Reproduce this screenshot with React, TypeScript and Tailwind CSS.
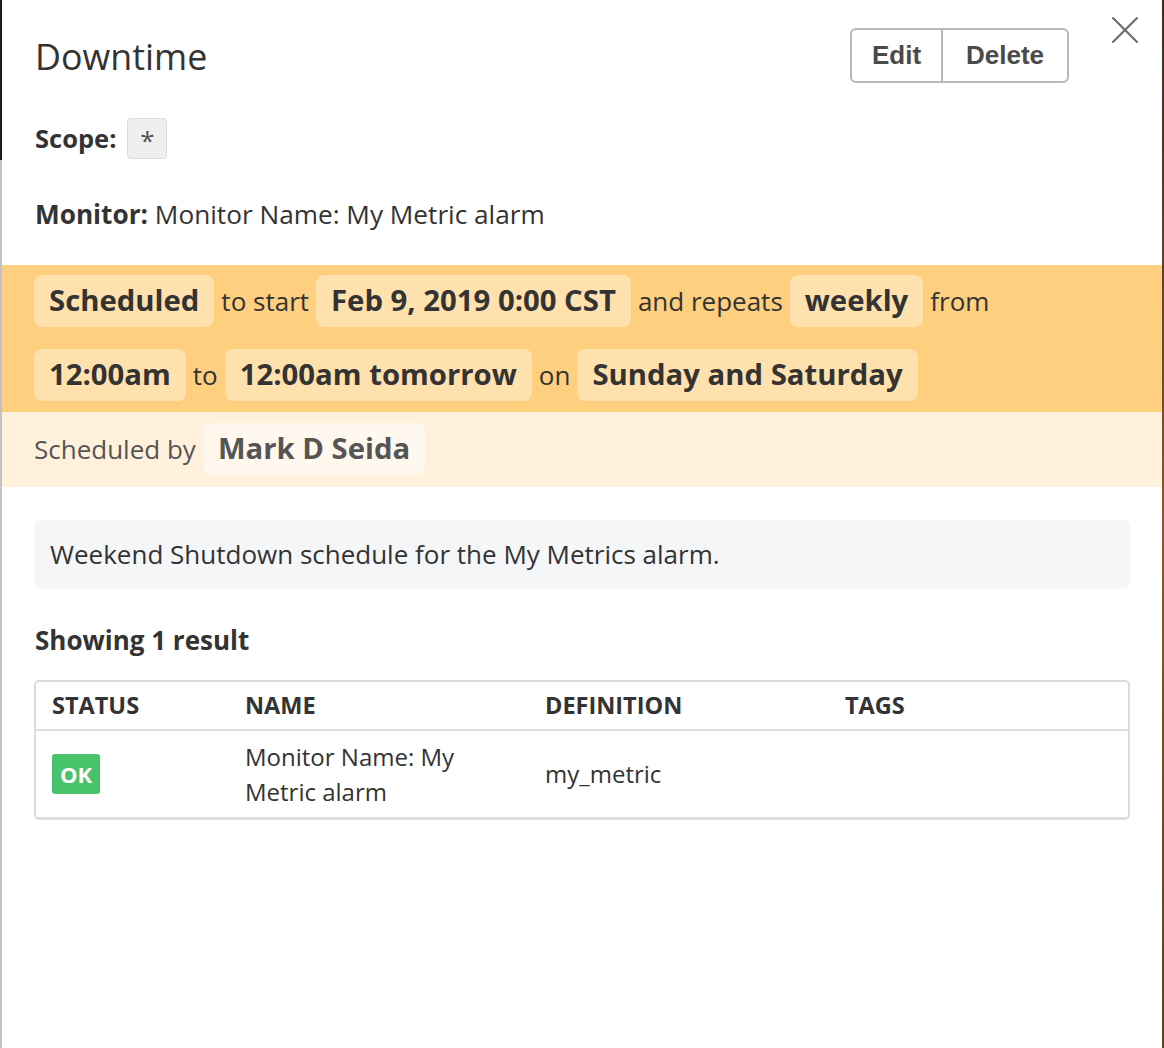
import { X } from 'lucide-react'

const sans = { fontFamily: '"Open Sans", "Noto Sans", sans-serif' }

function Pill({ children, tone = 'orange' }: { children: React.ReactNode; tone?: 'orange' | 'light' }) {
  const bg = tone === 'orange' ? 'bg-[#fee1ad] text-[#333]' : 'bg-[#fff8ee] text-[#555]'
  return (
    <span className={`inline-flex h-[52px] items-center rounded-[8px] px-[15px] text-[29.3px] font-bold ${bg}`}>
      {children}
    </span>
  )
}

function Word({ children }: { children: React.ReactNode }) {
  return <span className="text-[26px] text-[#333]">{children}</span>
}

export default function App() {
  return (
    <div className="flex h-[1048px] w-[1164px] overflow-hidden bg-white" style={sans}>
      {/* page behind the modal */}
      <div className="flex w-[2px] flex-col">
        <div className="h-[160px] bg-[#1e1a1f]" />
        <div className="flex-1 bg-[#c2c2c2]" />
      </div>

      <div className="relative flex flex-1 flex-col bg-white text-[#333]">
        <button className="absolute right-[13px] top-[6px] text-[#6b6b6b]">
          <X size={48} strokeWidth={1.05} />
        </button>

        {/* header */}
        <div className="flex h-[55px] items-center justify-between mt-[28px] pl-[33px] pr-[93px]">
          <h1 className="text-[35.8px] font-normal leading-[46px] text-[#333]">Downtime</h1>
          <div className="flex h-[55px] overflow-hidden rounded-[6px] border-2 border-[#b8b8b8] text-[26px] font-bold text-[#4a4a4a]" style={{ fontFamily: '"Liberation Sans", Arial, sans-serif' }}>
            <span className="flex w-[91px] items-center justify-center border-r-2 border-[#b8b8b8]">Edit</span>
            <span className="flex w-[124px] items-center justify-center">Delete</span>
          </div>
        </div>

        <div className="mt-[35px] flex h-[41px] items-center gap-[11px] pl-[33px]">
          <span className="text-[25.5px] font-bold">Scope:</span>
          <span className="flex h-[41px] w-[40px] items-start justify-center rounded-[4px] border border-[#dadada] bg-[#efefef] pt-[2px] text-[26px] text-[#555]">*</span>
        </div>

        <div className="mt-[37px] pl-[33px] text-[26.2px] leading-[36px]">
          <span className="font-bold">Monitor:</span> Monitor Name: My Metric alarm
        </div>

        {/* schedule band */}
        <div className="mt-[33px] flex flex-col gap-[22px] bg-[#fdcf7f] pb-[11px] pl-[32px] pt-[10px]">
          <div className="flex items-baseline gap-[7px]">
            <Pill>Scheduled</Pill>
            <Word>to start</Word>
            <Pill>Feb 9, 2019 0:00 CST</Pill>
            <Word>and repeats</Word>
            <Pill>weekly</Pill>
            <Word>from</Word>
          </div>
          <div className="flex items-baseline gap-[7px]">
            <Pill>12:00am</Pill>
            <Word>to</Word>
            <Pill>12:00am tomorrow</Pill>
            <Word>on</Word>
            <Pill>Sunday and Saturday</Pill>
          </div>
        </div>
        <div className="flex items-baseline gap-[7px] bg-[#fff1dc] pb-[12px] pl-[32px] pt-[11px]">
          <span className="text-[26px] text-[#555]">Scheduled by</span>
          <Pill tone="light">Mark D Seida</Pill>
        </div>

        <div className="mx-[32px] mt-[33px] flex h-[69px] items-center rounded-[6px] bg-[#f5f6f8] px-[16px] text-[26px] text-[#333]">
          Weekend Shutdown schedule for the My Metrics alarm.
        </div>

        <div className="mt-[34px] pl-[33px] text-[26px] font-bold leading-[34px]">Showing 1 result</div>

        {/* results table */}
        <div className="mx-[32px] mt-[23px] rounded-[5px] border-2 border-b-[3px] border-[#dcdce1]">
          <div className="grid h-[49px] grid-cols-[193px_300px_300px_1fr] items-center border-b-2 border-[#dcdce1] pl-[16px] text-[23.5px] font-bold uppercase text-[#333]">
            <span>Status</span>
            <span>Name</span>
            <span>Definition</span>
            <span>Tags</span>
          </div>
          <div className="grid h-[86px] grid-cols-[193px_300px_300px_1fr] items-center pl-[16px] text-[24px] text-[#333]">
            <span className="flex h-[40px] w-[48px] items-center justify-center rounded-[3px] bg-[#48c36c] text-[22px] font-bold text-white">OK</span>
            <span className="pr-[30px] leading-[35px]">Monitor Name: My Metric alarm</span>
            <span>my_metric</span>
            <span />
          </div>
        </div>
      </div>

      <div className="w-[2px] bg-gradient-to-b from-[#3b2a22] via-[#8a5a2a] to-[#5a4020]" />
    </div>
  )
}
